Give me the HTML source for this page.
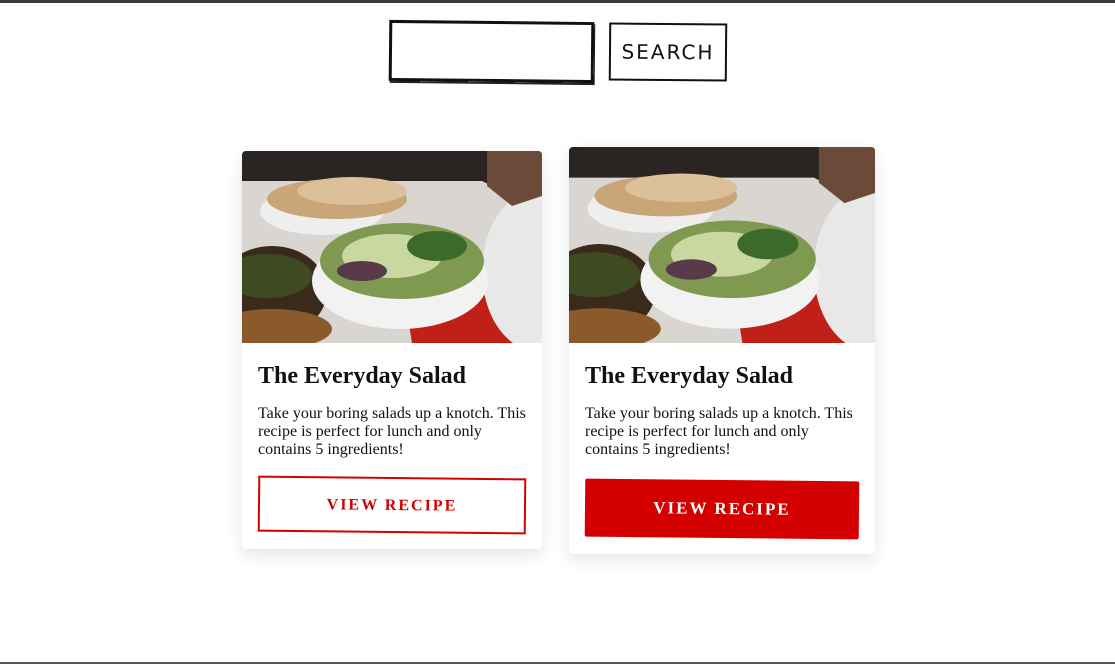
<!DOCTYPE html>
<html><head><meta charset="utf-8"><style>
html,body{margin:0;padding:0}
body{width:1115px;height:664px;position:relative;background:#fff;overflow:hidden;font-family:"Liberation Serif",serif}
.top{position:absolute;left:0;right:0;top:0;height:3px;background:#3a3a3c}
.bot{position:absolute;left:0;right:0;top:662px;height:2px;background:#555}
.inp{position:absolute;left:389px;top:21px;width:199px;height:55px;border:3px solid #111;transform:rotate(0.6deg);box-shadow:1px 2px 0 #222}
.sbtn{position:absolute;left:609px;top:23px;width:114px;height:54px;border:2px solid #111;transform:rotate(0.5deg);font-family:"Comic Sans MS","DejaVu Sans",sans-serif;font-size:20px;letter-spacing:2px;text-align:center;line-height:54px;color:#111}
.card{position:absolute;width:300px;height:398px;background:#fff;border-radius:4px;box-shadow:0 6px 16px rgba(30,50,80,.12);overflow:hidden}
.card svg{display:block}
.card h2{margin:20px 16px 0;font-size:24px;font-weight:bold;color:#111}
.card p{margin:15px 12px 0 16px;font-size:16px;line-height:18px;color:#111}
.b{position:absolute;left:16px;top:326px;width:268px;height:56px;box-sizing:border-box;font-weight:bold;font-size:16px;letter-spacing:2px;text-align:center;line-height:54px;transform:rotate(0.6deg)}
.b1{border:2px solid #d40000;color:#d40000}
.b2{background:#d40000;color:#fff;border-radius:2px}
</style></head><body>
<div class="top"></div>
<div class="inp"></div>
<div class="sbtn">SEARCH</div>
<div class="card" style="left:242px;top:151px">
<svg width="300" height="192" viewBox="0 0 300 192">
<rect width="300" height="192" fill="#2a2422"/>
<polygon points="0,30 240,30 300,60 300,192 0,192" fill="#d9d6d2"/>
<polygon points="160,130 300,90 300,192 170,192" fill="#c02018"/>
<ellipse cx="80" cy="60" rx="62" ry="24" fill="#eee"/>
<ellipse cx="95" cy="48" rx="70" ry="20" fill="#caa577"/>
<ellipse cx="110" cy="40" rx="55" ry="14" fill="#dcc09a"/>
<ellipse cx="295" cy="120" rx="55" ry="80" fill="#e8e8e8"/>
<path d="M245 0 L300 0 L300 45 L270 55 L245 35Z" fill="#6b4a3a"/>
<ellipse cx="30" cy="140" rx="55" ry="45" fill="#3a2a1c"/>
<ellipse cx="25" cy="125" rx="45" ry="22" fill="#3e4a22"/>
<ellipse cx="30" cy="178" rx="60" ry="20" fill="#8a5a2a"/>
<ellipse cx="158" cy="130" rx="88" ry="48" fill="#f2f2f2"/>
<ellipse cx="160" cy="110" rx="82" ry="38" fill="#7f9a50"/>
<ellipse cx="150" cy="105" rx="50" ry="22" fill="#c9d8a0"/>
<ellipse cx="195" cy="95" rx="30" ry="15" fill="#3c6a2a"/>
<ellipse cx="120" cy="120" rx="25" ry="10" fill="#5a3a4a"/>
</svg>
<h2>The Everyday Salad</h2>
<p>Take your boring salads up a knotch. This recipe is perfect for lunch and only contains 5 ingredients!</p>
<div class="b b1">VIEW RECIPE</div>
</div>
<div class="card" style="left:569px;top:147px;width:306px;height:407px">
<svg width="306" height="196" viewBox="0 0 300 192" preserveAspectRatio="none">
<rect width="300" height="192" fill="#2a2422"/>
<polygon points="0,30 240,30 300,60 300,192 0,192" fill="#d9d6d2"/>
<polygon points="160,130 300,90 300,192 170,192" fill="#c02018"/>
<ellipse cx="80" cy="60" rx="62" ry="24" fill="#eee"/>
<ellipse cx="95" cy="48" rx="70" ry="20" fill="#caa577"/>
<ellipse cx="110" cy="40" rx="55" ry="14" fill="#dcc09a"/>
<ellipse cx="295" cy="120" rx="55" ry="80" fill="#e8e8e8"/>
<path d="M245 0 L300 0 L300 45 L270 55 L245 35Z" fill="#6b4a3a"/>
<ellipse cx="30" cy="140" rx="55" ry="45" fill="#3a2a1c"/>
<ellipse cx="25" cy="125" rx="45" ry="22" fill="#3e4a22"/>
<ellipse cx="30" cy="178" rx="60" ry="20" fill="#8a5a2a"/>
<ellipse cx="158" cy="130" rx="88" ry="48" fill="#f2f2f2"/>
<ellipse cx="160" cy="110" rx="82" ry="38" fill="#7f9a50"/>
<ellipse cx="150" cy="105" rx="50" ry="22" fill="#c9d8a0"/>
<ellipse cx="195" cy="95" rx="30" ry="15" fill="#3c6a2a"/>
<ellipse cx="120" cy="120" rx="25" ry="10" fill="#5a3a4a"/>
</svg>
<h2>The Everyday Salad</h2>
<p>Take your boring salads up a knotch. This recipe is perfect for lunch and only contains 5 ingredients!</p>
<div class="b b2" style="top:333px;width:274px;height:58px;line-height:58px;font-size:17px">VIEW RECIPE</div>
</div>
<div class="bot"></div>
</body></html>
